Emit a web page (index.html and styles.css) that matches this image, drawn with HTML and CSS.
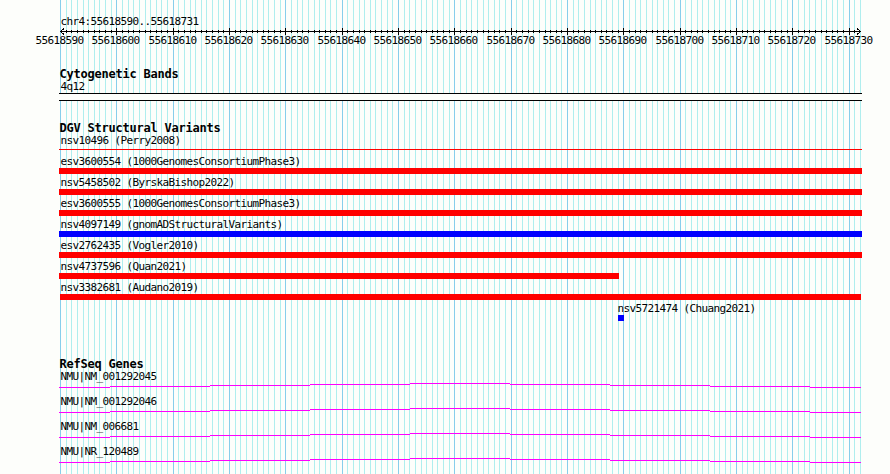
FILE: index.html
```html
<!DOCTYPE html>
<html lang="en">
<head>
<meta charset="utf-8">
<title>chr4:55618590..55618731</title>
<link rel="stylesheet" href="styles.css">
</head>
<body>
<main class="browser">
  <svg class="grid" id="grid" width="890" height="474" shape-rendering="crispEdges" aria-hidden="true"></svg>
  <section class="ruler">
    <div class="label">chr4:55618590..55618731</div>
    <svg class="axis" id="axis" width="804" height="22" shape-rendering="crispEdges">
      <path class="ink" d="M1 3.5H802M5 0.5L1.5 3.5L5 6.5M798 0.5L801.5 3.5L798 6.5"/>
    </svg>
  </section>
  <section class="track cytobands">
    <h2>Cytogenetic Bands</h2>
    <div class="label">4q12</div>
    <div class="band"></div>
  </section>
  <section class="track variants">
    <h2>DGV Structural Variants</h2>
    <div class="row thin"><div class="label">nsv10496 (Perry2008)</div><div class="bar"></div></div>
    <div class="row"><div class="label">esv3600554 (1000GenomesConsortiumPhase3)</div><div class="bar"></div></div>
    <div class="row"><div class="label">nsv5458502 (ByrskaBishop2022)</div><div class="bar"></div></div>
    <div class="row"><div class="label">esv3600555 (1000GenomesConsortiumPhase3)</div><div class="bar"></div></div>
    <div class="row"><div class="label">nsv4097149 (gnomADStructuralVariants)</div><div class="bar gain"></div></div>
    <div class="row"><div class="label">esv2762435 (Vogler2010)</div><div class="bar"></div></div>
    <div class="row"><div class="label">nsv4737596 (Quan2021)</div><div class="bar partial"></div></div>
    <div class="row"><div class="label">nsv3382681 (Audano2019)</div><div class="bar inset"></div></div>
    <div class="row late"><div class="label">nsv5721474 (Chuang2021)</div><div class="bar gain point"></div></div>
  </section>
  <section class="track genes">
    <h2>RefSeq Genes</h2>
    <div class="gene"><div class="label">NMU|NM_001292045</div><svg class="intron" width="803" height="5"><use href="#arc"/></svg></div>
    <div class="gene"><div class="label">NMU|NM_001292046</div><svg class="intron" width="803" height="5"><use href="#arc"/></svg></div>
    <div class="gene"><div class="label">NMU|NM_006681</div><svg class="intron" width="803" height="5"><use href="#arc"/></svg></div>
    <div class="gene"><div class="label">NMU|NR_120489</div><svg class="intron" width="803" height="5"><use href="#arc"/></svg></div>
  </section>
  <svg class="defs" width="0" height="0" aria-hidden="true">
    <defs><path id="arc" d="M0 4.5H51M51 3.5H151M151 2.5H251M251 1.5H351M351 .5H451M451 1.5H551M551 2.5H651M651 3.5H751M751 4.5H802" stroke="#f0f" shape-rendering="crispEdges"/></defs>
  </svg>
</main>
<script src="ruler.js"></script>
</body>
</html>
```
FILE: styles.css
```css
body {
  margin: 0;
  background: #fdfefb;
  color: #000;
  font: 11px/17px "DejaVu Sans Mono", monospace;
  letter-spacing: -0.622px;
}
.browser {
  position: relative;
  box-sizing: border-box;
  width: 890px;
  height: 474px;
  padding: 13px 28px 0 59px;
  overflow: hidden;
}
.grid {
  position: absolute;
  inset: 0;
  z-index: -1;
}
.grid .minor { stroke: #afeeee; }
.grid .major { stroke: #87ceeb; }
svg { display: block; }
.axis { overflow: visible; }
.ink { fill: none; stroke: #000; }
.label {
  height: 15px;
  padding-left: 1.5px;
  white-space: nowrap;
}
h2 {
  height: 11px;
  margin: 0;
  padding-left: 0.5px;
  font-size: 12px;
  line-height: 14px;
  letter-spacing: -0.224px;
  white-space: nowrap;
}
.cytobands { margin-top: 17px; }
.band {
  box-sizing: border-box;
  height: 8px;
  border: solid #000;
  border-width: 1px 0;
  background: #fdfefb;
}
.variants { margin-top: 20px; }
.bar { height: 6px; background: #f00; }
.gain { background: #00f; }
.thin { margin-bottom: 3px; }
.thin .label { height: 17px; }
.thin .bar { height: 1px; }
.partial { width: 560px; }
.inset { margin: 0 1px; }
.late { padding-left: 558px; }
.late .label { padding-left: 0.5px; }
.point { width: 6px; margin-left: 1px; }
.genes { margin-top: 36px; }
.gene { height: 25px; }
```
FILE: ruler.js
```javascript
const NS = "http://www.w3.org/2000/svg";
const START = 55618590;
const BASES = 142;
const WIDTH = 800;
const grid = document.getElementById("grid");
const axis = document.getElementById("axis");

function add(parent, tag, attrs) {
  const el = document.createElementNS(NS, tag);
  for (const key in attrs) el.setAttribute(key, attrs[key]);
  parent.appendChild(el);
  return el;
}

for (let i = 0; i <= BASES; i++) {
  const x = Math.round(i * WIDTH / BASES);
  const major = i % 10 === 0;
  add(grid, "path", { class: major ? "major" : "minor", d: `M${x + 60.5} 0V474` });
  if (i > 0 && i < BASES) {
    add(axis, "path", { class: "ink", d: major ? `M${x + 1.5} 0V7` : `M${x + 1.5} 2V5` });
  }
  if (major) {
    add(axis, "text", { x: x - 23.5, y: 16 }).textContent = START + i;
  }
}
```
